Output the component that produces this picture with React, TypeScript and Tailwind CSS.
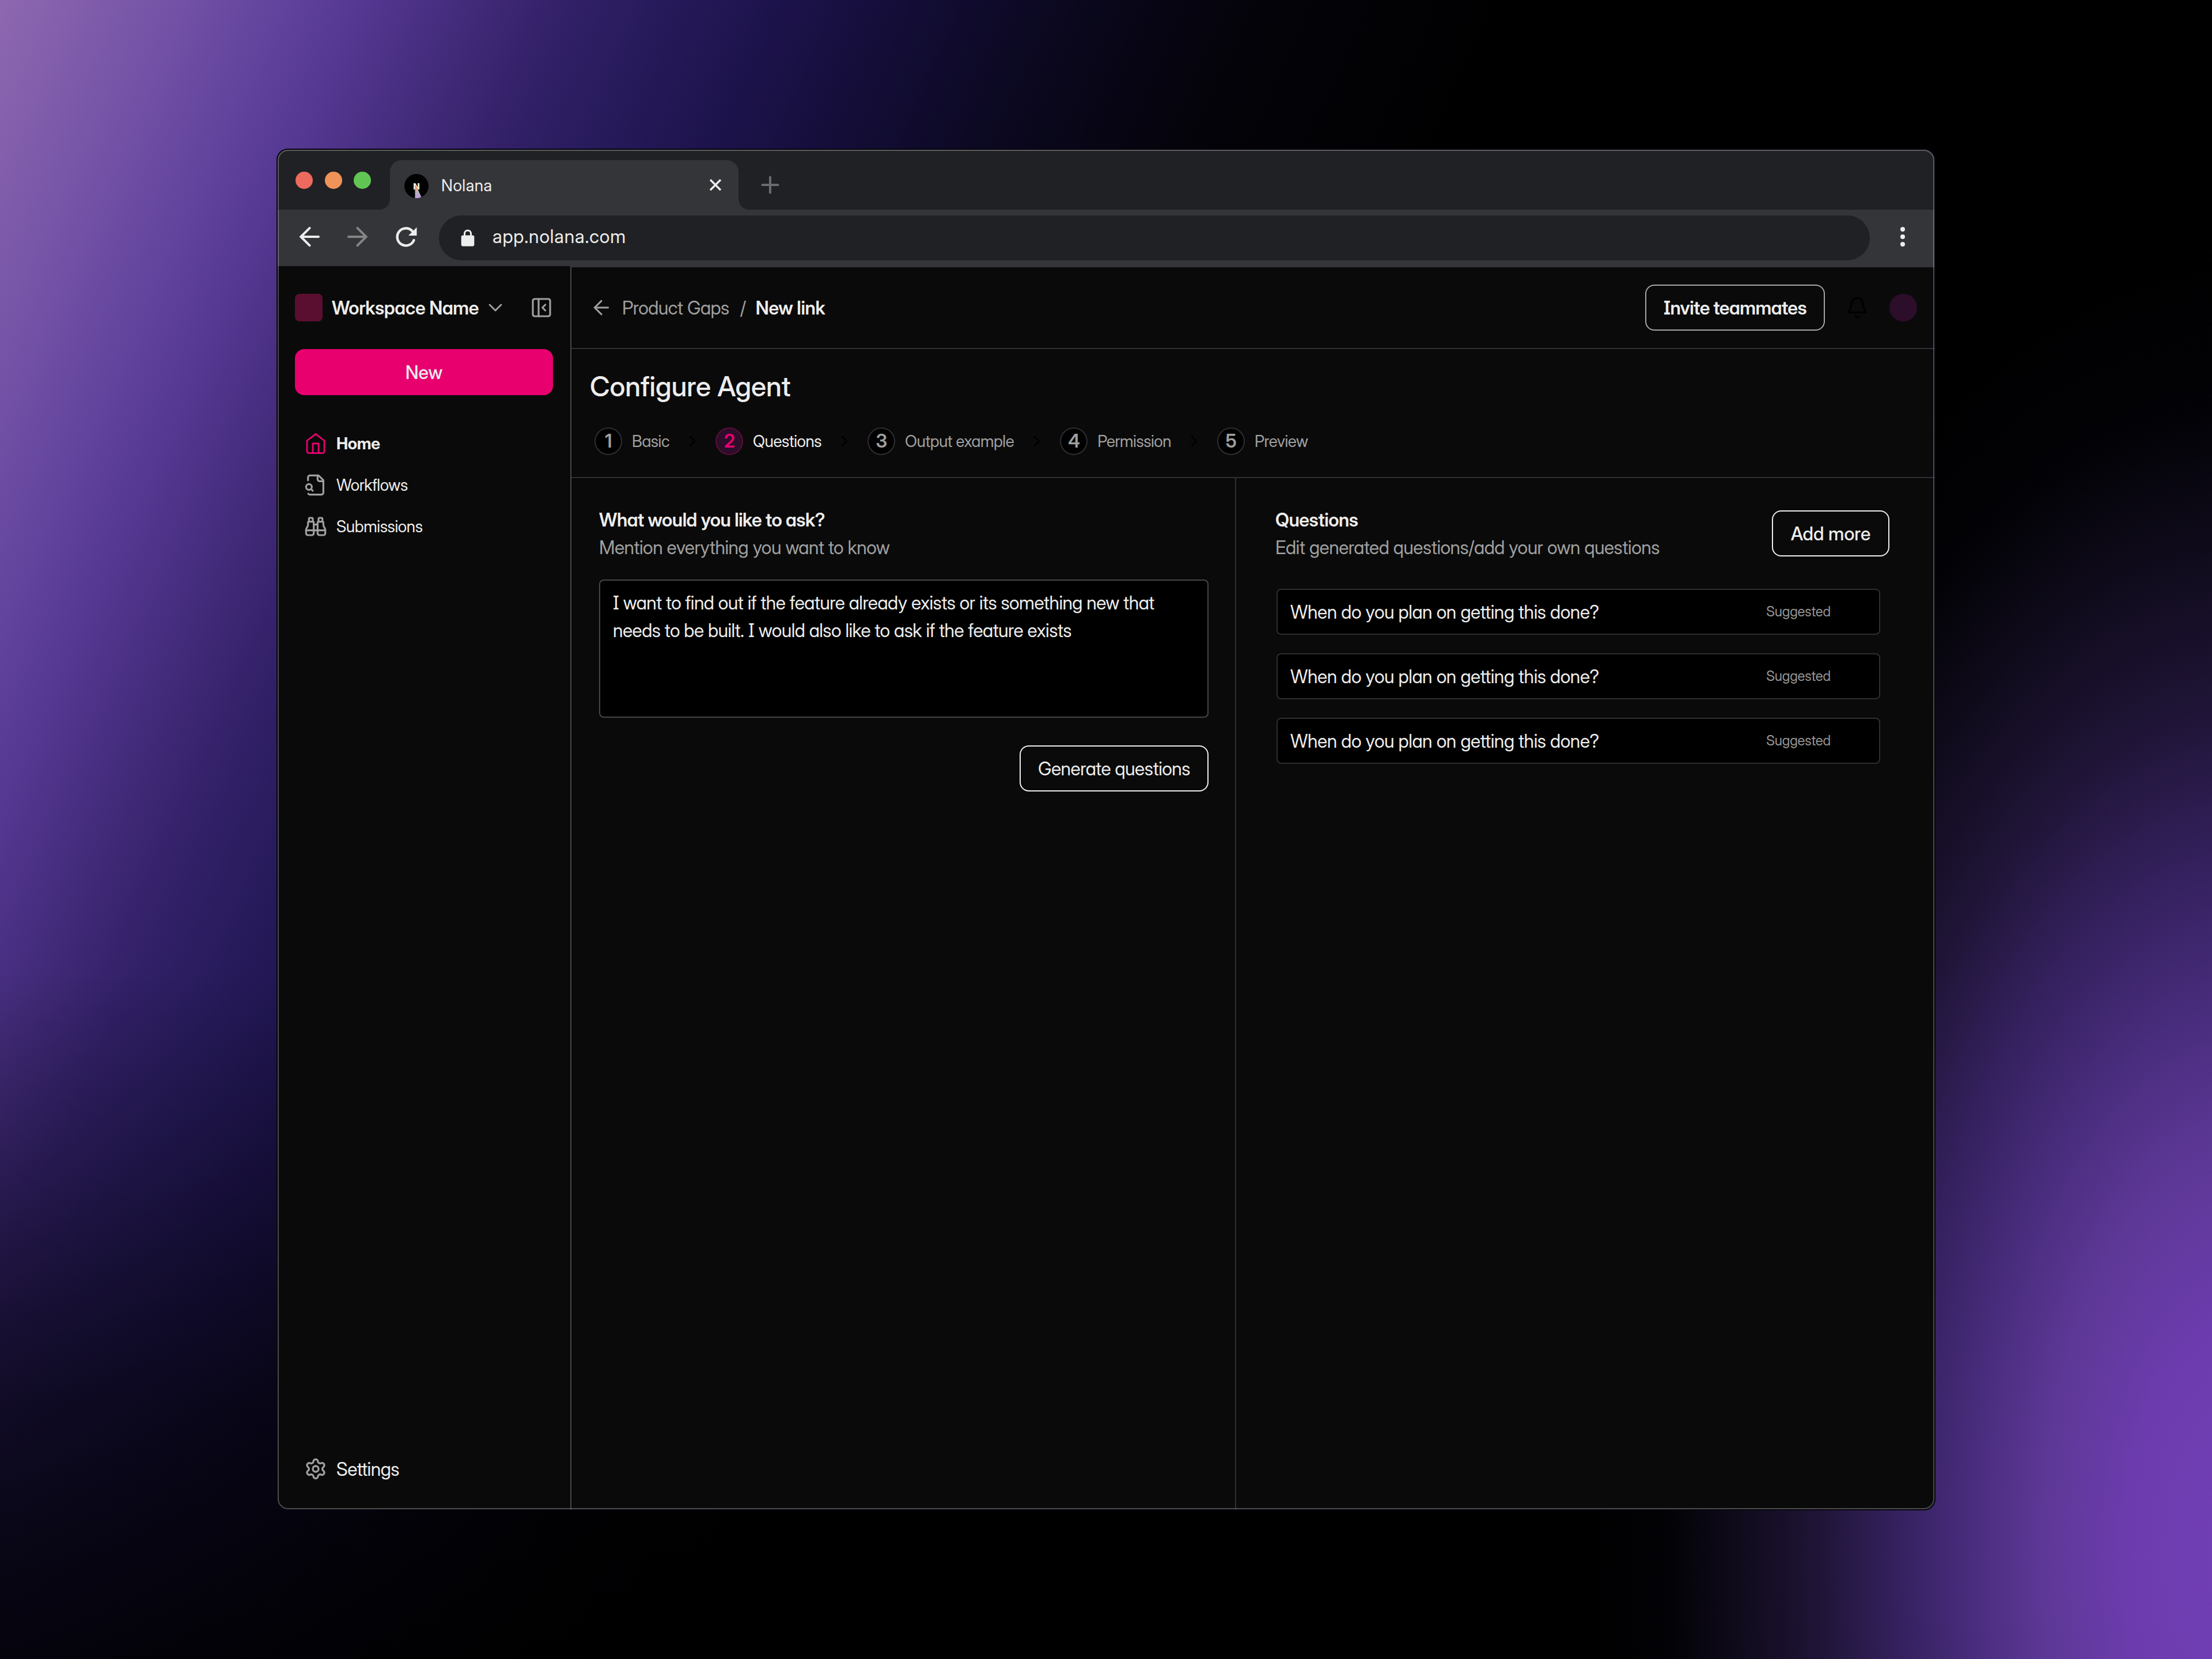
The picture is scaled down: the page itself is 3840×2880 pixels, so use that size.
import React from 'react';
import { ArrowLeft, Bell, Binoculars, ChevronDown, ChevronRight, PanelLeftClose, Settings } from 'lucide-react';

const steps = [
    { label: 'Basic' },
    { label: 'Questions', active: true },
    { label: 'Output example' },
    { label: 'Permission' },
    { label: 'Preview' },
];

const questions = [
    'When do you plan on getting this done?',
    'When do you plan on getting this done?',
    'When do you plan on getting this done?',
];

const HomeIcon: React.FC = () => (
    <svg width="40" height="40" viewBox="0 0 24 24" fill="none" stroke="#e8006f" strokeWidth="1.7" strokeLinecap="round" strokeLinejoin="round">
        <path d="m3 9 9-7 9 7v11a2 2 0 0 1-2 2H5a2 2 0 0 1-2-2z" />
        <path d="M9 22V12h6v10" />
    </svg>
);

const WorkflowIcon: React.FC = () => (
    <svg width="40" height="40" viewBox="0 0 24 24" fill="none" stroke="#a0a0a0" strokeWidth="1.9" strokeLinecap="round" strokeLinejoin="round">
        <path d="M14 2v4a2 2 0 0 0 2 2h4" />
        <path d="M4.268 21a2 2 0 0 0 1.727 1H18a2 2 0 0 0 2-2V7l-5-5H6a2 2 0 0 0-2 2v3" />
        <path d="m9 18-1.500-1.500" />
        <circle cx="5" cy="14" r="3" />
    </svg>
);

const Favicon: React.FC = () => (
    <svg width="42" height="42" viewBox="0 0 42 42">
        <defs>
            <linearGradient id="beam" x1="0" y1="0" x2="0" y2="1">
                <stop offset="0.3" stopColor="#f0935a" />
                <stop offset="0.5" stopColor="#b9b4b4" />
                <stop offset="1" stopColor="#b79ae0" />
            </linearGradient>
        </defs>
        <circle cx="21" cy="21" r="21" fill="#000" />
        <text x="15.2" y="27" fontFamily="Inter" fontWeight="800" fontSize="15" fill="#f0f0f0">N</text>
        <path d="M19.500 18l4 9 6 13-5 2h-6V28z" fill="url(#beam)" />
    </svg>
);

const TabStrip: React.FC = () => (
    <div className="flex h-[106px] pl-[33px] bg-[#202124]">
        <div className="flex gap-[20.5px] pt-10 pr-[15px]">
            <span className="w-[30px] h-[30px] rounded-full bg-[#ed6a5e]" />
            <span className="w-[30px] h-[30px] rounded-full bg-[#f09359]" />
            <span className="w-[30px] h-[30px] rounded-full bg-[#61c554]" />
        </div>
        <span className="w-[18px] h-[18px] self-end bg-[radial-gradient(circle_at_0_0,transparent_17.5px,#343538_18px)]" />
        <div className="mt-5 flex items-center w-[605px] pl-[25px] pr-[29px] rounded-t-[20px] bg-[#343538]">
            <div className="pt-1">
                <Favicon />
            </div>
            <span className="ml-[22px] pt-0.5 text-[28px] leading-8 tracking-[0.02em] [font-feature-settings:normal]">Nolana</span>
            <svg className="ml-auto" width="22" height="22" viewBox="0 0 22 22" stroke="#ededed" strokeWidth="3.4">
                <path d="M2 2l18 18M20 2L2 20" />
            </svg>
        </div>
        <span className="w-[18px] h-[18px] self-end bg-[radial-gradient(circle_at_100%_0,transparent_17.5px,#343538_18px)]" />
        <svg className="ml-[21px] mt-[47px]" width="32" height="32" viewBox="0 0 32 32" stroke="#6a6b6d" strokeWidth="4" strokeLinecap="round">
            <path d="M16 2.500v27M2.500 16h27" />
        </svg>
    </div>
);

const Toolbar: React.FC = () => (
    <div className="flex items-center h-[98px] pl-[39px] bg-[#343538]">
        <div className="flex items-center gap-12 pb-1">
            <svg width="36" height="36" viewBox="0 0 36 36" fill="none" stroke="#ededed" strokeWidth="4" strokeLinecap="round">
                <path d="M34 18H3.500M18.500 2.800L3.300 18l15.200 15.200" />
            </svg>
            <svg width="36" height="36" viewBox="0 0 36 36" fill="none" stroke="#858587" strokeWidth="4" strokeLinecap="round">
                <path d="M2 18h30.500M17.500 2.800L32.700 18 17.500 33.200" />
            </svg>
            <svg width="37" height="36" viewBox="0 0 37 36" fill="none">
                <path d="M31.500 24A15 15 0 1 1 28.500 8" stroke="#ededed" strokeWidth="4.400" strokeLinecap="round" />
                <path d="M36.500 1.500v14.500h-14.500z" fill="#ededed" />
            </svg>
        </div>
        <div className="ml-[38px] flex items-center w-[2484px] h-[78px] pl-[38px] rounded-full bg-[#202124]">
            <svg width="24" height="30" viewBox="0 0 24 30">
                <rect x="0.700" y="10.500" width="22.600" height="19" rx="3" fill="#ededed" />
                <path d="M6.500 12V7.500a5.500 5.500 0 0 1 11 0V12" fill="none" stroke="#ededed" strokeWidth="3" />
            </svg>
            <span className="ml-[31px] pb-1 text-[32px] leading-9 tracking-[0.026em] [font-feature-settings:normal]">app.nolana.com</span>
        </div>
        <div className="ml-[53px] pb-1 flex flex-col gap-[5px]">
            <span className="w-2 h-2 rounded-full bg-[#ededed]" />
            <span className="w-2 h-2 rounded-full bg-[#ededed]" />
            <span className="w-2 h-2 rounded-full bg-[#ededed]" />
        </div>
    </div>
);

const Sidebar: React.FC = () => (
    <aside className="flex flex-col w-[512px] pl-8 pr-[30px] pt-12 pb-8 border-r-2 border-[#464648]">
        <div className="flex items-center h-12">
            <span className="w-12 h-12 rounded-lg bg-[#5a0f30]" />
            <span className="ml-4 pt-px font-semibold tracking-[-0.01em]">Workspace Name</span>
            <ChevronDown className="ml-[9px] text-[#a0a0a0]" size={40} strokeWidth={1.7} />
            <PanelLeftClose className="ml-auto text-[#a0a0a0]" size={40} strokeWidth={1.9} />
        </div>

        <button className="mt-12 pt-px h-20 rounded-2xl bg-[#e8006f] font-medium tracking-normal">New</button>

        <nav className="mt-12 px-4 text-[28px]">
            <div className="flex items-center gap-4 h-[72px]">
                <HomeIcon />
                <span className="font-bold tracking-[-0.01em]">Home</span>
            </div>
            <div className="flex items-center gap-4 h-[72px]">
                <WorkflowIcon />
                <span className="tracking-[-0.012em]">Workflows</span>
            </div>
            <div className="flex items-center gap-4 h-[72px]">
                <Binoculars className="text-[#a0a0a0]" size={40} strokeWidth={1.9} />
                <span className="tracking-[-0.014em]">Submissions</span>
            </div>
        </nav>

        <div className="mt-auto flex items-center gap-4 h-20 px-4">
            <Settings className="text-[#a0a0a0]" size={40} strokeWidth={2} />
            <span className="pt-px">Settings</span>
        </div>
    </aside>
);

const Header: React.FC = () => (
    <header className="flex items-center h-[142px] px-8 border-b-2 border-[#2e2e33]">
        <ArrowLeft className="text-[#a0a0a0]" size={40} strokeWidth={1.8} />
        <span className="ml-4 pt-px text-[#a0a0a0]">Product Gaps</span>
        <span className="ml-[19px] pt-px text-[#a0a0a0]">/</span>
        <span className="ml-[17px] pt-px font-semibold tracking-[-0.01em]">New link</span>
        <button className="ml-auto w-[312px] h-20 pt-px rounded-2xl border-2 border-[#a5a5a5] font-semibold tracking-[-0.0175em]">Invite teammates</button>
        <Bell className="ml-9 text-black" size={40} strokeWidth={2} />
        <span className="ml-9 w-12 h-12 rounded-full bg-[#2c0d2a]" />
    </header>
);

const Stepper: React.FC = () => (
    <section className="h-[224px] px-8 pt-8 border-b-2 border-[#2e2e33]">
        <h1 className="pt-px text-[48px] leading-[64px] font-medium tracking-[-0.003em]">Configure Agent</h1>
        <div className="mt-[39px] flex items-center pl-2 text-[28px]">
            {steps.map((step, i) => (
                <React.Fragment key={step.label}>
                    {i > 0 && <ChevronRight className="mx-6 text-black" size={32} strokeWidth={2} />}
                    <span
                        className={
                            step.active
                                ? 'flex items-center justify-center w-12 h-12 rounded-full border-2 border-[#5a0f35] bg-[#2c0d2a] text-[#e8006f] text-[32px] font-semibold'
                                : 'flex items-center justify-center w-12 h-12 rounded-full border-2 border-[#2e2e33] bg-black text-[#a0a0a0] text-[32px] font-semibold'
                        }
                    >
                        {i + 1}
                    </span>
                    <span className={step.active ? 'ml-[17px] tracking-[-0.017em]' : 'ml-[17px] text-[#a0a0a0] tracking-[-0.017em]'}>{step.label}</span>
                </React.Fragment>
            ))}
        </div>
    </section>
);

const AskPanel: React.FC = () => (
    <section className="w-[1154px] pl-12 pr-[46px] pt-[49px] border-r-2 border-[#2e2e33]">
        <h2 className="font-semibold tracking-[-0.015em]">What would you like to ask?</h2>
        <p className="text-[#a0a0a0]">Mention everything you want to know</p>
        <div className="mt-[31px] w-[1058px] h-[240px] px-[22px] py-[15px] rounded-lg border-2 border-[#464646] bg-black tracking-[-0.0172em]">
            I want to find out if the feature already exists or its something new that
            <br />
            needs to be built. I would also like to ask if the feature exists
        </div>
        <div className="mt-12 flex justify-end">
            <button className="w-[328px] h-20 pt-px rounded-2xl border-2 border-[#ededed]">Generate questions</button>
        </div>
    </section>
);

const QuestionsPanel: React.FC = () => (
    <section className="flex-1 pl-[68px] pr-20 pt-[49px]">
        <div className="flex items-center justify-between">
            <div>
                <h2 className="font-semibold tracking-[-0.015em]">Questions</h2>
                <p className="text-[#a0a0a0]">Edit generated questions/add your own questions</p>
            </div>
            <button className="mb-0.5 w-[204px] h-20 pt-px rounded-2xl border-2 border-[#ededed] font-medium tracking-normal">Add more</button>
        </div>
        <div className="mt-[47px] ml-0.5 mr-4 flex flex-col gap-8">
            {questions.map((q, i) => (
                <div key={i} className="flex items-center justify-between h-20 pl-[22px] pr-[84px] rounded-lg border-2 border-[#2e2e33] bg-black">
                    <span className="pt-px tracking-[-0.014em]">{q}</span>
                    <span className="text-2xl text-[#959595] tracking-[-0.006em]">Suggested</span>
                </div>
            ))}
        </div>
    </section>
);

export default function App() {
    return (
        <div className="w-[3840px] h-[2880px] overflow-hidden px-[480px] py-[258px] text-[32px] leading-[48px] tracking-[-0.016em] text-[#ededed] font-['Inter_Display','Inter',sans-serif] [font-feature-settings:'cv11','cv08'] bg-[radial-gradient(1080px_2140px_at_3900px_2700px,#7340b6_0%,#6c3cae_19%,#5d3896_33%,#482c7c_45%,#33205c_57%,#1f1436_69%,#0e0a19_83%,rgba(5,4,12,0.5)_93%,transparent_108%),linear-gradient(to_top,rgba(0,0,0,0.85)_0px,rgba(0,0,0,0.6)_450px,rgba(0,0,0,0.25)_850px,transparent_1200px),linear-gradient(114deg,#8e68b0_0px,#7352a6_280px,#5e409b_480px,#50348c_620px,#412a78_760px,#322068_900px,#261a5a_1060px,#1c124a_1250px,#130d36_1450px,#0b0820_1680px,#040309_2000px,#000_2450px)]">
            <div className="relative w-[2880px] h-[2364px] rounded-[20px] overflow-hidden bg-[#0a0a0a]">
                <TabStrip />
                <Toolbar />
                <div className="flex h-[2160px]">
                    <Sidebar />
                    <main className="flex flex-col flex-1 border-t-2 border-[#343538]">
                        <Header />
                        <Stepper />
                        <div className="flex flex-1">
                            <AskPanel />
                            <QuestionsPanel />
                        </div>
                    </main>
                </div>
                {/* window outline */}
                <div className="absolute inset-0 rounded-[20px] border-2 border-[#07060f]" />
                <div className="absolute inset-0.5 rounded-[18px] border-2 border-white/26" />
            </div>
        </div>
    );
}
